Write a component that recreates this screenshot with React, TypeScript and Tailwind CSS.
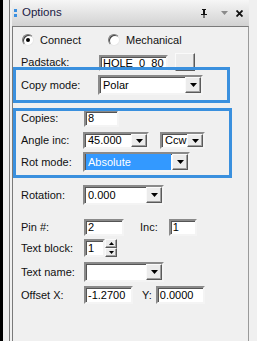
import React from "react"

const sunken =
  "border-2 border-t-[#8a8a8a] border-l-[#8a8a8a] border-b-[#f4f4f4] border-r-[#f4f4f4] bg-white shadow-[inset_1px_1px_0_#555]"
const raised =
  "border border-t-[#fafafa] border-l-[#fafafa] border-b-[#5a5a5a] border-r-[#5a5a5a] bg-[#ececec] shadow-[inset_-1px_-1px_0_#a0a0a0]"

function Arrow() {
  return (
    <div className={`flex h-full w-[16px] shrink-0 items-center justify-center ${raised}`}>
      <svg width="7" height="4" viewBox="0 0 7 4">
        <path d="M0 0h7L3.5 4z" fill="#000" />
      </svg>
    </div>
  )
}

function Select({ w, value, selected }: { w: string; value: string; selected?: boolean }) {
  return (
    <div className={`flex h-full items-stretch ${w} ${sunken}`}>
      <div className="flex min-w-0 flex-1 items-center pl-[1px] pr-[1px]">
        <span
          className={`flex h-full flex-1 items-center pl-[2px] ${selected ? "bg-[#3399ff] text-white" : "text-black"}`}
        >
          {value}
        </span>
      </div>
      <Arrow />
    </div>
  )
}

function Input({ w, value }: { w: string; value: string }) {
  return (
    <div className={`flex h-full items-center pl-[2px] text-black ${w} ${sunken}`}>{value}</div>
  )
}

function Label({ children, w = "w-[63px]" }: { children: React.ReactNode; w?: string }) {
  return <div className={`${w} shrink-0 text-[#111]`}>{children}</div>
}

function Radio({ checked }: { checked?: boolean }) {
  return (
    <div className="flex h-[12px] w-[12px] items-center justify-center rounded-full border border-t-[#7a7a7a] border-l-[#7a7a7a] border-b-[#e8e8e8] border-r-[#e8e8e8] bg-white shadow-[inset_1px_1px_0_#404040]">
      {checked && <div className="h-[4px] w-[4px] rounded-full bg-black" />}
    </div>
  )
}

export default function App() {
  return (
    <div className="relative flex h-[341px] w-[257px] overflow-hidden bg-[#f0f0f0] font-['Liberation_Sans',Arial,sans-serif] text-[11px] leading-none">
      <div className="w-[3px] bg-black" />
      <div className="w-[6px]" />
      <div className="w-px bg-[#7a7a7a]" />
      <div className="w-[2px]" />

      <div className="flex w-[237px] flex-col">
        <div className="flex h-[26px] items-center bg-gradient-to-b from-[#f6f6f6] to-[#d2d2d2] pl-[2px] pr-[6px]">
          <div className="flex flex-col gap-[2px]">
            <div className="h-[3px] w-[3px] bg-[#3a8fe0]" />
            <div className="h-[3px] w-[3px] bg-[#3a8fe0]" />
          </div>
          <span className="ml-[5px] text-[11.5px] text-[#1a1a44]">Options</span>
          <div className="ml-auto flex items-center gap-[8px]">
            <svg width="8" height="9" viewBox="0 0 8 9">
              <path d="M2 0h4v1H5v4h2v1H4.5v3h-1V6H1V5h2V1H2z" fill="#111" />
            </svg>
            <svg width="7" height="4" viewBox="0 0 7 4" className="ml-[5px]">
              <path d="M0 0h7L3.5 4z" fill="#8a8a8a" />
            </svg>
            <svg width="7" height="7" viewBox="0 0 7 7">
              <path d="M0.5 0.5l6 6M6.5 0.5l-6 6" stroke="#111" strokeWidth="1.8" />
            </svg>
          </div>
        </div>

        <div className="flex flex-1 flex-col border-l border-t border-r border-l-[#7a7a7a] border-t-[#7a7a7a] border-r-[#9a9a9a] pl-[8px]">
          <div className="mt-[4px] flex h-[18px] items-center">
            <div className="ml-[1px] flex items-center">
              <Radio checked />
              <span className="ml-[6px] text-[#111]">Connect</span>
            </div>
            <div className="ml-[27px] flex items-center">
              <Radio />
              <span className="ml-[6px] text-[#111]">Mechanical</span>
            </div>
          </div>

          <div className="mt-[4px] flex h-[18px] items-center">
            <Label w="w-[78px]">Padstack:</Label>
            <div className="h-[16px] self-end">
              <Input w="w-[69px]" value="HOLE_0_80_" />
            </div>
            <div className={`ml-[7px] h-[18px] w-[20px] ${raised}`} />
          </div>

          <div className="mt-[4px] flex h-[20px] items-center">
            <Label w="w-[77px]">Copy mode:</Label>
            <Select w="w-[105px]" value="Polar" />
          </div>

          <div className="mt-[15px] flex h-[17px] items-center">
            <Label>Copies:</Label>
            <Input w="w-[35px]" value="8" />
          </div>

          <div className="mt-[5px] flex h-[17px] items-center">
            <Label w="w-[62px]">Angle inc:</Label>
            <Select w="w-[66px]" value="45.000" />
            <div className="ml-[11px] h-full">
              <Select w="w-[45px]" value="Ccw" />
            </div>
          </div>

          <div className="mt-[3px] flex h-[20px] items-center">
            <Label w="w-[62px]">Rot mode:</Label>
            <Select w="w-[107px]" value="Absolute" selected />
          </div>

          <div className="mt-[13px] flex h-[20px] items-center">
            <Label w="w-[62px]">Rotation:</Label>
            <Select w="w-[81px]" value="0.000" />
          </div>

          <div className="mt-[14px] flex h-[17px] items-center">
            <Label>Pin #:</Label>
            <Input w="w-[40px]" value="2" />
            <span className="ml-[16px] text-[#111]">Inc:</span>
            <div className="ml-[11px] h-full">
              <Input w="w-[28px]" value="1" />
            </div>
          </div>

          <div className="mt-[3px] flex h-[18px] items-center">
            <Label>Text block:</Label>
            <Input w="w-[21px]" value="1" />
            <div className="flex h-full w-[12px] flex-col">
              <div className={`flex flex-1 items-center justify-center ${raised}`}>
                <svg width="5" height="3" viewBox="0 0 5 3">
                  <path d="M0 3h5L2.5 0z" fill="#000" />
                </svg>
              </div>
              <div className={`flex flex-1 items-center justify-center ${raised}`}>
                <svg width="5" height="3" viewBox="0 0 5 3">
                  <path d="M0 0h5L2.5 3z" fill="#000" />
                </svg>
              </div>
            </div>
          </div>

          <div className="mt-[5px] flex h-[20px] items-center">
            <Label>Text name:</Label>
            <Select w="w-[80px]" value="" />
          </div>

          <div className="mt-[4px] flex h-[18px] items-center">
            <Label>Offset X:</Label>
            <Input w="w-[49px]" value="-1.2700" />
            <span className="ml-[9px] text-[#111]">Y:</span>
            <div className="ml-[4px] h-full">
              <Input w="w-[49px]" value="0.0000" />
            </div>
          </div>
        </div>
      </div>

      <div className="absolute left-[13px] top-[67px] h-[36px] w-[217px] border-[3px] border-[#3a90de]" />
      <div className="absolute left-[13px] top-[108px] h-[70px] w-[219px] border-[3px] border-[#3a90de]" />
    </div>
  )
}
